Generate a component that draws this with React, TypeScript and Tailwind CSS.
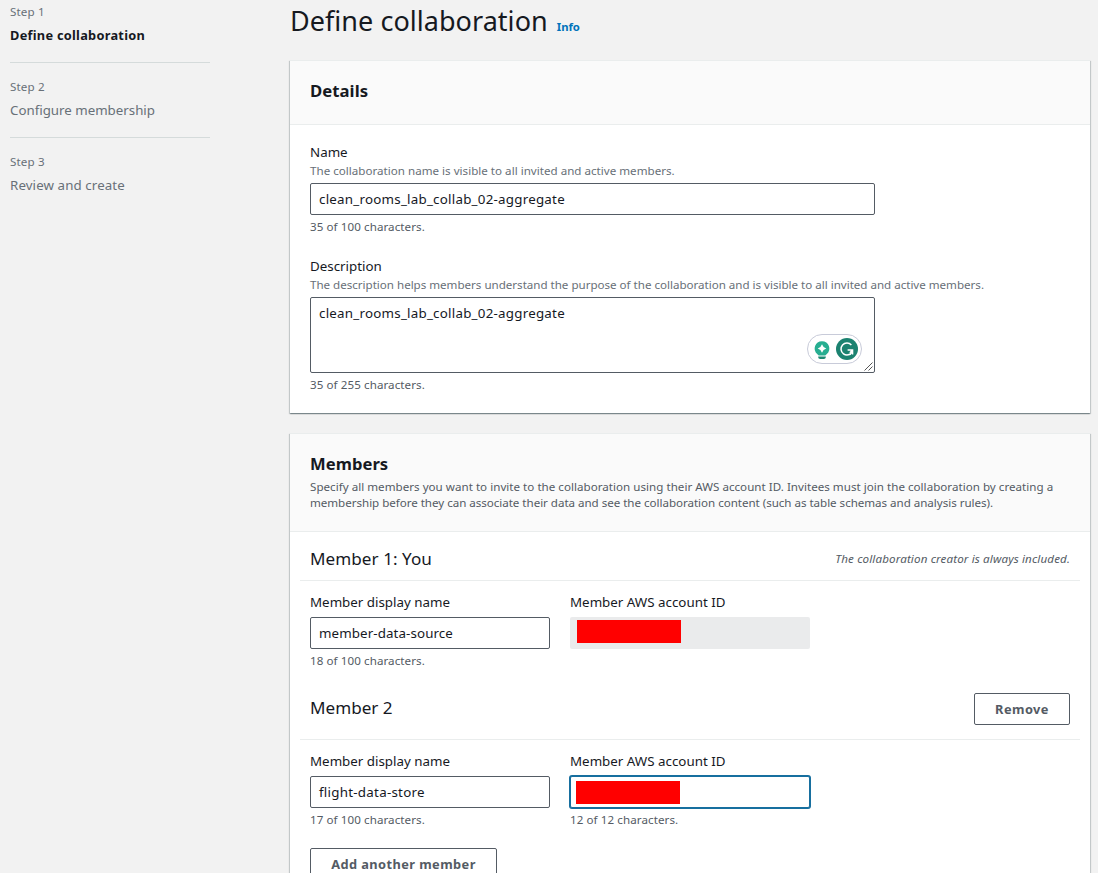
import type { ReactNode } from "react";

function Step({ index, title, style }: { index: number; title: string; style: string }) {
  return (
    <li className="border-b border-[#d5dbdb] pb-4 last:border-0">
      <div className="pt-px text-[11.6px] leading-4 tracking-[0.16px] text-[#687078]">Step {index}</div>
      <div className={`mt-1 leading-[22px] ${style}`}>{title}</div>
    </li>
  );
}

function Card({ header, children }: { header: ReactNode; children: ReactNode }) {
  return (
    <section className="border-t border-[#eaeded] bg-white shadow-[0_1px_1px_0_rgba(0,28,36,0.3),1px_1px_1px_0_rgba(0,28,36,0.15),-1px_1px_1px_0_rgba(0,28,36,0.15)]">
      <header className="border-b border-[#eaeded] bg-[#fafafa] px-5 pt-[18px]">{header}</header>
      {children}
    </section>
  );
}

function Label({ children }: { children: ReactNode }) {
  return <div className="text-[13.35px] leading-[22px] text-[#16191f]">{children}</div>;
}

function Hint({ tracking, children }: { tracking: string; children: ReactNode }) {
  return <div className={`mb-1 whitespace-nowrap text-[11.6px] leading-4 text-[#687078] ${tracking}`}>{children}</div>;
}

function Count({ children }: { children: ReactNode }) {
  return <div className="mt-1 text-[11.6px] leading-4 tracking-[0.08px] text-[#545b64]">{children}</div>;
}

function Field({ tracking, children }: { tracking: string; children: ReactNode }) {
  return (
    <div className={`h-8 rounded-[2px] border border-[#545b64] bg-white px-2 py-1 text-[13.35px] leading-[22px] text-[#16191f] ${tracking}`}>
      {children}
    </div>
  );
}

function Assistant() {
  return (
    <div className="absolute right-3 bottom-2 flex h-[30px] w-[55px] items-center rounded-full border border-[#c8cbd9] bg-white">
      <svg width="53" height="28" viewBox="0 0 53 28">
        <path d="M14 6.2a7.3 7.3 0 0 0-4.6 13c.6.5 1.1.9 1.3 1.3h6.6c.2-.4.7-.8 1.3-1.3A7.3 7.3 0 0 0 14 6.2Z" fill="#27ae91" />
        <path d="M14 9.2l1.6 2.7 2.7 1.6-2.7 1.6-1.6 2.7-1.6-2.7-2.7-1.6 2.7-1.6Z" fill="#fff" />
        <path d="M10.2 21.6h7.6v.6a1.9 1.9 0 0 1-1.9 1.8h-3.8a1.9 1.9 0 0 1-1.9-1.8Z" fill="#1c8a73" />
        <circle cx="39" cy="14" r="11" fill="#1b8270" />
        <path d="M43.4 9.9A6 6 0 1 0 44.2 17" fill="none" stroke="#fff" strokeWidth="1.5" />
        <path d="M39.6 15h5v4.4M44.4 15.2l-2.6 2.6" fill="none" stroke="#fff" strokeWidth="1.4" />
      </svg>
    </div>
  );
}

export default function App() {
  return (
    <div className="flex h-[873px] w-[1098px] overflow-hidden bg-[#f2f2f2] pl-2.5 font-['Noto_Sans',sans-serif] text-[#16191f]">
      <nav className="w-[200px] shrink-0 pt-[3px]">
        <ol className="flex flex-col gap-[15px]">
          <Step index={1} title="Define collaboration" style="text-[12.8px] tracking-[0.26px] font-bold text-[#16191f]" />
          <Step index={2} title="Configure membership" style="text-[13.3px] text-[#687078]" />
          <Step index={3} title="Review and create" style="text-[13.3px] tracking-[0.11px] text-[#687078]" />
        </ol>
      </nav>

      <main className="ml-20 w-[800px] shrink-0 pt-0.5">
        <div className="flex items-baseline gap-[9px]">
          <h1 className="text-[27px] leading-[37px] tracking-[0.04px]">Define collaboration</h1>
          <a className="text-[11.3px] leading-4 font-bold text-[#0073bb]">Info</a>
        </div>

        <div className="mt-[21px] flex flex-col gap-5">
          <Card header={<h2 className="pb-[22px] text-[16.7px] leading-[23px] font-bold tracking-[0.05px]">Details</h2>}>
            <div className="px-5 pt-4 pb-5">
              <Label>Name</Label>
              <Hint tracking="tracking-[0.01px]">The collaboration name is visible to all invited and active members.</Hint>
              <div className="w-[565px]">
                <Field tracking="tracking-[0.24px]">clean_rooms_lab_collab_02-aggregate</Field>
              </div>
              <Count>35 of 100 characters.</Count>

              <div className="mt-5">
                <Label>Description</Label>
                <Hint tracking="tracking-[-0.016px]">
                  The description helps members understand the purpose of the collaboration and is visible to all invited and active members.
                </Hint>
                <div className="relative h-[76px] w-[565px] rounded-[2px] border border-[#545b64] px-2 py-1 text-[13.35px] leading-[22px] tracking-[0.24px]">
                  clean_rooms_lab_collab_02-aggregate
                  <Assistant />
                  <svg className="absolute right-px bottom-px" width="9" height="9" viewBox="0 0 9 9" stroke="#444" strokeWidth="0.9">
                    <path d="M0.5 8.5L8.5 0.5M4.5 8.5L8.5 4.5" />
                  </svg>
                </div>
                <Count>35 of 255 characters.</Count>
              </div>
            </div>
          </Card>

          <Card
            header={
              <div className="pb-5">
                <h2 className="text-[16.6px] leading-[23px] font-bold tracking-[0.05px]">Members</h2>
                <p className="mt-1 text-[11.6px] leading-4 whitespace-nowrap text-[#545b64]">
                  <span className="block tracking-[0.02px]">
                    Specify all members you want to invite to the collaboration using their AWS account ID. Invitees must join the collaboration by creating a
                  </span>
                  <span className="block tracking-[-0.033px]">
                    membership before they can associate their data and see the collaboration content (such as table schemas and analysis rules).
                  </span>
                </p>
              </div>
            }
          >
            <div className="px-2.5 pb-5">
              <div className="flex h-[49px] items-start justify-between border-b border-[#eaeded] px-2.5 pt-[15px]">
                <h3 className="text-[17.1px] leading-[23px] tracking-[0.05px]">Member 1: You</h3>
                <em className="mt-1 text-[11.6px] leading-4 tracking-[0.13px] text-[#545b64]">The collaboration creator is always included.</em>
              </div>
              <div className="flex gap-5 px-2.5 pt-2.5">
                <div className="w-60">
                  <Label>Member display name</Label>
                  <div className="mt-1">
                    <Field tracking="tracking-[0.1px]">member-data-source</Field>
                  </div>
                  <Count>18 of 100 characters.</Count>
                </div>
                <div className="w-60">
                  <Label>Member AWS account ID</Label>
                  <div className="mt-1 h-8 rounded-[2px] bg-[#eaebec] pt-[3px] pl-[7px]">
                    <div className="h-[23px] w-[104px] bg-[#ff0000]" />
                  </div>
                </div>
              </div>

              <div className="mt-6 flex h-[47px] items-start justify-between border-b border-[#eaeded] px-2.5">
                <h3 className="mt-[3px] text-[17.1px] leading-[23px]">Member 2</h3>
                <button className="h-8 w-24 rounded-[2px] border border-[#545b64] text-[12.8px] leading-[22px] font-bold tracking-[0.45px] text-[#545b64]">
                  Remove
                </button>
              </div>
              <div className="flex gap-5 px-2.5 pt-2.5">
                <div className="w-60">
                  <Label>Member display name</Label>
                  <div className="mt-1">
                    <Field tracking="tracking-[0.26px]">flight-data-store</Field>
                  </div>
                  <Count>17 of 100 characters.</Count>
                </div>
                <div className="w-60">
                  <Label>Member AWS account ID</Label>
                  <div className="mt-1 h-8 rounded-[2px] border border-[#176f9f] bg-white pt-1 pl-[5px] shadow-[0_0_0_1px_#176f9f]">
                    <div className="h-[23px] w-[104px] bg-[#ff0000]" />
                  </div>
                  <Count>12 of 12 characters.</Count>
                </div>
              </div>
              <button className="mt-5 ml-2.5 h-8 w-[187px] rounded-[2px] border border-[#545b64] text-[12.8px] leading-[22px] font-bold tracking-[0.43px] text-[#545b64]">
                Add another member
              </button>
            </div>
          </Card>
        </div>
      </main>
    </div>
  );
}
